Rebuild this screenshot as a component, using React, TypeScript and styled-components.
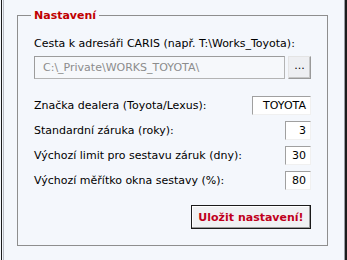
import styled, { createGlobalStyle } from "styled-components";

const Global = createGlobalStyle`
  html, body {
    margin: 0;
    padding: 0;
    background: #f4f7fc;
  }
  body {
    font-family: Tahoma, "DejaVu Sans", sans-serif;
    font-size: 11px;
    color: #000;
  }
`;

const Frame = styled.div`
  box-sizing: border-box;
  width: 346px;
  height: 260px;
  margin-left: 1px;
  border-left: 1px solid #1c1c1c;
  border-right: 2px solid #1c1c1c;
`;

const Panel = styled.div`
  box-sizing: border-box;
  height: 100%;
  margin-left: 1px;
  border-left: 1px solid #b8bcc4;
  border-right: 1px solid #9a9ea6;
  padding: 9px 16px 0 13px;
`;

const Group = styled.fieldset`
  box-sizing: border-box;
  margin: 0;
  height: 237px;
  border: 1px solid #8e8e8e;
  padding: 15px 16px 0 16px;
  display: flex;
  flex-direction: column;
`;

const Legend = styled.legend`
  margin-left: -3px;
  padding: 0 3px;
  color: #c00000;
  font-weight: bold;
  font-size: 11px;
`;

const Label = styled.div`
  line-height: 14px;
  white-space: nowrap;
`;

const PathRow = styled.div`
  display: flex;
  gap: 3px;
  margin-top: 5px;
  margin-bottom: 17px;
`;

const PathInput = styled.div`
  box-sizing: border-box;
  flex: 1;
  height: 23px;
  padding: 0 8px;
  display: flex;
  align-items: center;
  background: #f6f8fb;
  color: #8c8c8c;
  border: 1px solid #b4b4b4;
  border-top-color: #9c9c9c;
  border-left-color: #9c9c9c;
`;

const Browse = styled.button`
  box-sizing: border-box;
  width: 23px;
  height: 23px;
  padding: 0 0 4px;
  font: inherit;
  background: #eeeff2;
  border: 1px solid #9a9a9a;
  border-top-color: #e4e4e4;
  border-left-color: #e4e4e4;
  box-shadow: inset -1px -1px 0 #c6c6c6;
`;

const Row = styled.div`
  display: flex;
  align-items: center;
  justify-content: space-between;
  height: 19px;
  margin-bottom: 6px;
`;

const ValueBox = styled.div<{ $w: number }>`
  box-sizing: border-box;
  width: ${(p) => p.$w}px;
  height: 19px;
  padding: 0 4px;
  display: flex;
  align-items: center;
  justify-content: flex-end;
  background: #fff;
  border: 1px solid #f0f0f0;
  border-top-color: #a0a0a0;
  border-left-color: #a0a0a0;
`;

const Actions = styled.div`
  display: flex;
  justify-content: flex-end;
  margin-top: 9px;
`;

const SaveButton = styled.button`
  box-sizing: border-box;
  width: 120px;
  height: 24px;
  font: inherit;
  font-weight: bold;
  color: #c0001c;
  background: #f0f1f3;
  border: 1px solid #1a1a1a;
  box-shadow: inset -1px -1px 0 #9a9a9a, inset 1px 1px 0 #fff;
`;

const settings = [
  { label: "Značka dealera (Toyota/Lexus):", value: "TOYOTA", w: 59 },
  { label: "Standardní záruka (roky):", value: "3", w: 26 },
  { label: "Výchozí limit pro sestavu záruk (dny):", value: "30", w: 26 },
  { label: "Výchozí měřítko okna sestavy (%):", value: "80", w: 26 },
];

export default function App() {
  return (
    <>
      <Global />
      <Frame>
        <Panel>
          <Group>
            <Legend>Nastavení</Legend>
            <Label>Cesta k adresáři CARIS (např. T:\Works_Toyota):</Label>
            <PathRow>
              <PathInput>C:\_Private\WORKS_TOYOTA\</PathInput>
              <Browse>...</Browse>
            </PathRow>
            {settings.map((s) => (
              <Row key={s.label}>
                <Label>{s.label}</Label>
                <ValueBox $w={s.w}>{s.value}</ValueBox>
              </Row>
            ))}
            <Actions>
              <SaveButton>Uložit nastavení!</SaveButton>
            </Actions>
          </Group>
        </Panel>
      </Frame>
    </>
  );
}
